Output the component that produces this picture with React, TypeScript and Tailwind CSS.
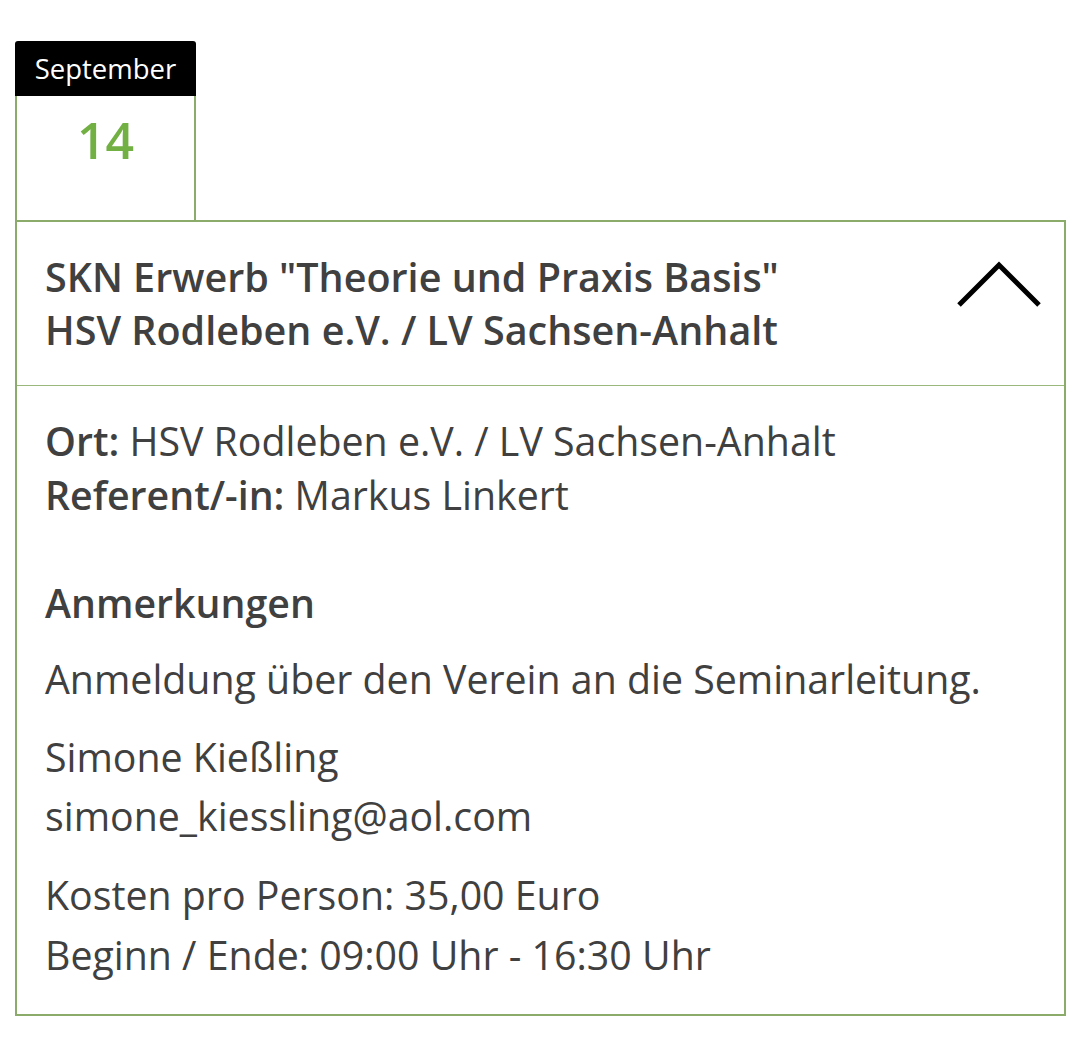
import React from "react";

export default function App() {
  return (
    <div
      className="min-h-[1039px] w-[1080px] bg-white pt-[41px] pl-[15px] text-[#404040]"
      style={{ fontFamily: '"Open Sans", "Noto Sans", sans-serif' }}
    >
      {/* Date tab */}
      <div className="w-[181px]">
        <div className="flex h-[55px] items-center justify-center rounded-t-[3px] bg-black text-[27.5px] leading-none text-white">
          September
        </div>
        <div className="flex h-[124px] items-start justify-center border-x-2 border-[#8bab6a] pt-[16px]">
          <span className="text-[50px] font-semibold leading-[56px] text-[#72b043]">14</span>
        </div>
      </div>

      {/* Event box */}
      <div className="w-[1051px] border-2 border-[#8bab6a]">
        <div className="flex items-start justify-between border-b border-b-[#9bb87c] pl-[28px] pr-[21px] pt-[29px] pb-[28px]">
          <h2 className="text-[39.5px] font-semibold leading-[53px]">
            SKN Erwerb "Theorie und Praxis Basis"
            <br />
            HSV Rodleben e.V. / LV Sachsen-Anhalt
          </h2>
          <svg
            width="88"
            height="48"
            viewBox="0 0 88 48"
            className="mt-[10px]"
            fill="none"
            stroke="#000"
            strokeWidth="5"
          >
            <polyline points="4,44 44,4 84,44" />
          </svg>
        </div>

        <div className="pl-[28px] pr-[21px] pt-[28px] pb-[29px] text-[39.3px]">
          <p className="leading-[54px]">
            <span className="font-semibold">Ort:</span> HSV Rodleben e.V. / LV Sachsen-Anhalt
            <br />
            <span className="font-semibold">Referent/-in:</span> Markus Linkert
          </p>
          <h3 className="mt-[54px] text-[39.3px] font-semibold leading-[54px]">Anmerkungen</h3>
          <p className="mt-[20px] leading-[59px]">Anmeldung über den Verein an die Seminarleitung.</p>
          <p className="mt-[19px] leading-[59px]">
            Simone Kießling
            <br />
            simone_kiessling@aol.com
          </p>
          <p className="mt-[19px] leading-[60px]">
            Kosten pro Person: 35,00 Euro
            <br />
            Beginn / Ende: 09:00 Uhr - 16:30 Uhr
          </p>
        </div>
      </div>
    </div>
  );
}
